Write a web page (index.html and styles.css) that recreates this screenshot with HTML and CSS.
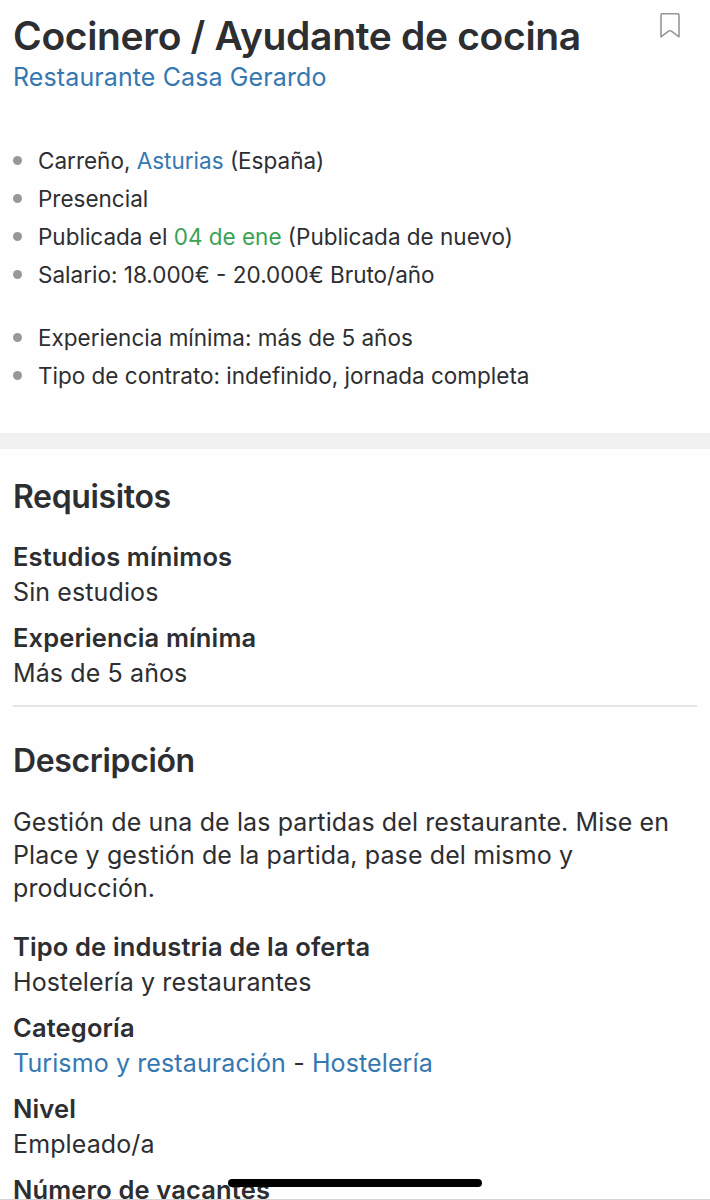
FILE: index.html
```html
<!DOCTYPE html>
<html lang="es">
<head>
  <meta charset="UTF-8" />
  <meta name="viewport" content="width=device-width, initial-scale=1" />
  <title>Cocinero / Ayudante de cocina</title>
  <link rel="stylesheet" href="styles.css">
</head>
<body>

  <header class="offer-header">
    <div class="title-row">
      <h1>Cocinero / Ayudante de cocina</h1>
      <button class="bookmark" aria-label="Guardar oferta">
        <svg width="20" height="26" viewBox="0 0 20 26" fill="none" stroke="#97979a" stroke-width="1.6" stroke-linejoin="round">
          <path d="M1 2.400a1.800 1.800 0 0 1 1.800-1.800h14.400a1.800 1.800 0 0 1 1.800 1.800v21.400l-7.600-5.600q-1.400-.900-2.800 0L1 23.800z" />
        </svg>
      </button>
    </div>
    <a class="company" href="#">Restaurante Casa Gerardo</a>

    <ul class="facts">
      <li>Carreño, <a href="#">Asturias</a> (España)</li>
      <li>Presencial</li>
      <li>Publicada el <span class="date">04 de ene</span> (Publicada de nuevo)</li>
      <li>Salario: 18.000€ - 20.000€ Bruto/año</li>
    </ul>
    <ul class="facts">
      <li>Experiencia mínima: más de 5 años</li>
      <li>Tipo de contrato: indefinido, jornada completa</li>
    </ul>
  </header>

  <main>
    <section class="requirements">
      <h2>Requisitos</h2>
      <dl>
        <dt>Estudios mínimos</dt>
        <dd>Sin estudios</dd>
        <dt>Experiencia mínima</dt>
        <dd>Más de 5 años</dd>
      </dl>
    </section>

    <section class="description">
      <h2>Descripción</h2>
      <p>Gestión de una de las partidas del restaurante. Mise en<br>Place y gestión de la partida, pase del mismo y<br>producción.</p>
      <dl>
        <dt>Tipo de industria de la oferta</dt>
        <dd>Hostelería y restaurantes</dd>
        <dt>Categoría</dt>
        <dd><a href="#">Turismo y restauración</a> - <a href="#">Hostelería</a></dd>
        <dt>Nivel</dt>
        <dd>Empleado/a</dd>
        <dt>Número de vacantes</dt>
      </dl>
    </section>
  </main>

  <div class="bottom-edge"></div>
  <div class="home-indicator"></div>

</body>
</html>
```

FILE: styles.css
```css
body {
  margin: 0;
  height: 1200px;
  overflow: hidden;
  background-color: #fefefe;
  color: #2d2e31;
  font-family: Inter, "Liberation Sans", sans-serif;
  font-size: 25px;
  letter-spacing: 0.11px;
}
a {
  color: #3578b1;
  text-decoration: none;
}
h1,
h2,
p,
ul,
dl,
dd {
  margin: 0;
  padding: 0;
}

/* Offer summary */
.offer-header {
  box-sizing: border-box;
  height: 449px;
  padding: 13px 13px 0;
  border-bottom: 16px solid #f1f1f1;
}
.title-row {
  display: flex;
  justify-content: space-between;
  height: 46px;
}
h1 {
  font-size: 39px;
  font-weight: 600;
  line-height: 46px;
  letter-spacing: -0.33px;
  white-space: nowrap;
}
.bookmark {
  width: 20px;
  height: 26px;
  margin-right: 17px;
  padding: 0;
  border: none;
  background: none;
}
.bookmark svg {
  display: block;
}
.company {
  display: block;
  line-height: 36px;
  margin-bottom: 47px;
}
.facts {
  margin-bottom: 25px;
  list-style: none;
  font-size: 22.5px;
  letter-spacing: 0;
}
.facts li {
  display: flex;
  line-height: 38px;
  white-space: pre;
}
.facts li::before {
  content: "";
  width: 9px;
  height: 9px;
  margin: 14px 16px 0 0;
  border-radius: 50%;
  background-color: #98989a;
}
.date {
  color: #3aa353;
}

/* Offer details */
main {
  padding: 0 13px;
}
h2 {
  font-size: 32px;
  font-weight: 600;
  line-height: 40px;
  letter-spacing: -0.35px;
}
.requirements {
  height: 228px;
  padding-top: 28px;
  border-bottom: 2px solid #e4e4e4;
}
.requirements dl {
  margin-top: 22px;
}
dt {
  font-size: 25.5px;
  font-weight: 600;
  line-height: 36px;
  letter-spacing: 0.14px;
}
dd {
  line-height: 34px;
  margin-bottom: 11px;
}
.description {
  padding-top: 34px;
}
.description p {
  margin: 25px 0 24px;
  line-height: 33px;
}

/* Fixed over the bottom of the page */
.bottom-edge {
  position: fixed;
  left: 0;
  right: 0;
  bottom: 0;
  height: 1px;
  background-color: #d4d4d4;
}
.home-indicator {
  position: fixed;
  left: 228px;
  bottom: 13px;
  width: 254px;
  height: 8.5px;
  border-radius: 5px;
  background-color: #000;
}
```
